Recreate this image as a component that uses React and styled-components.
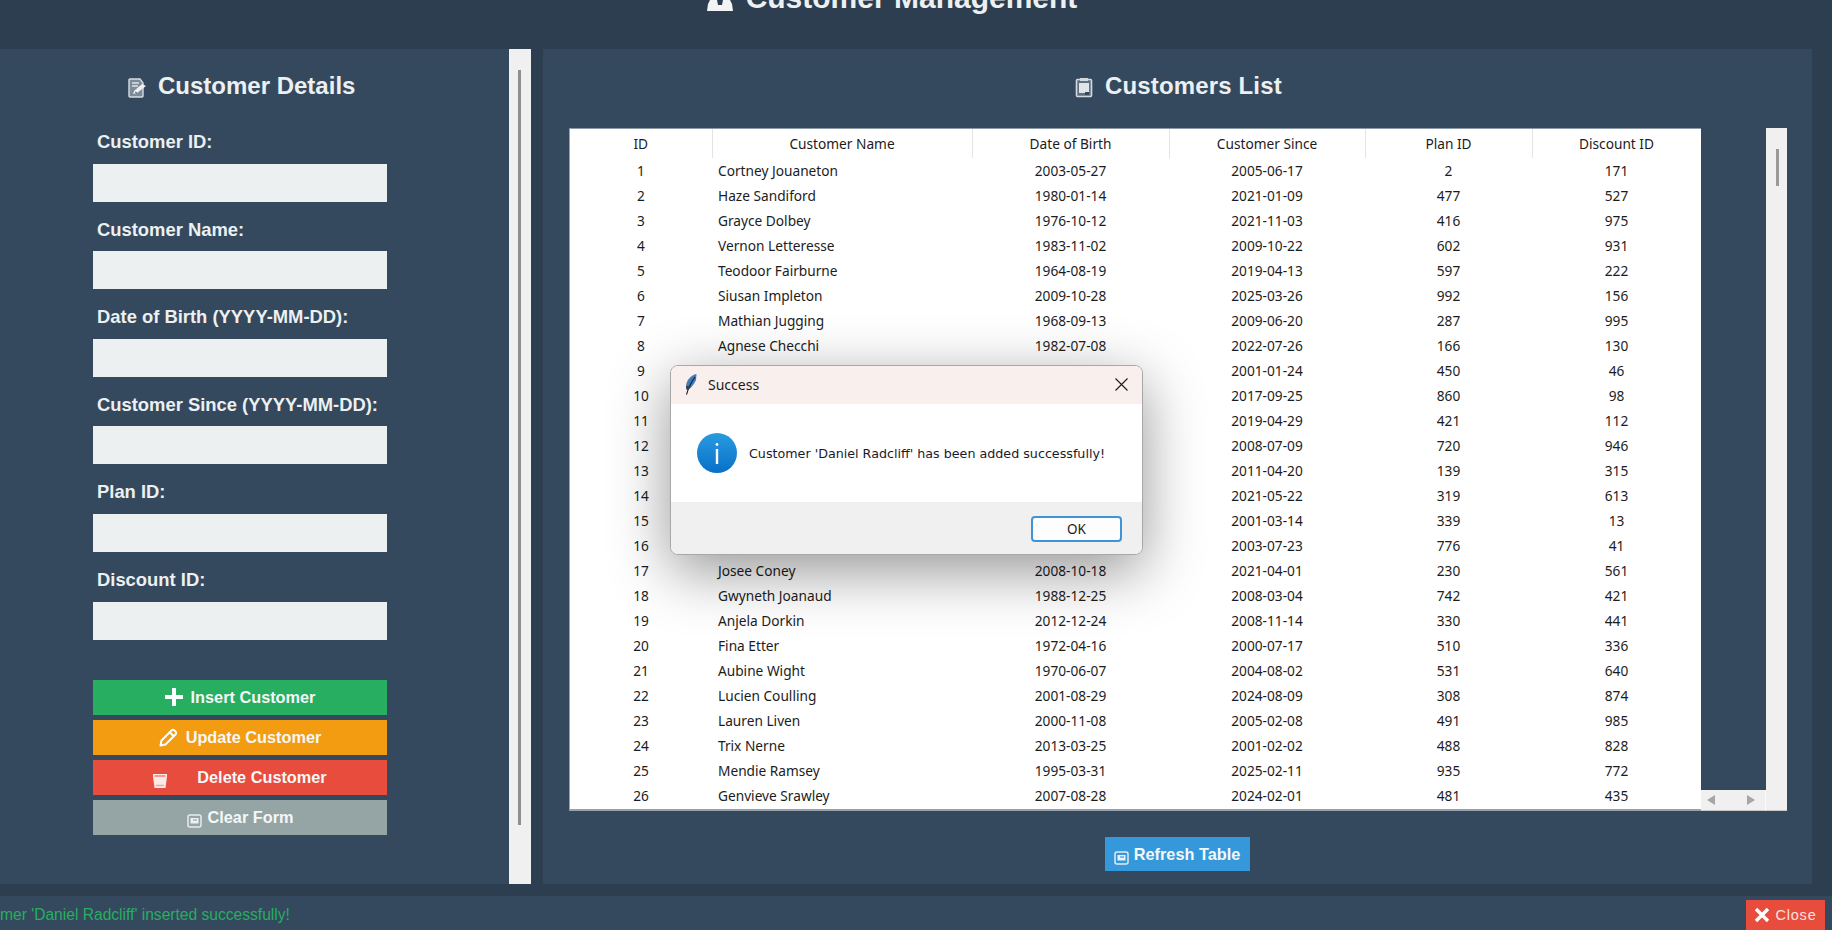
import React from "react";
import styled, { createGlobalStyle } from "styled-components";

const Global = createGlobalStyle`
  html, body { margin: 0; padding: 0; background: #2c3e50; }
  * { box-sizing: border-box; }
`;

const Page = styled.div`
  width: 1832px; height: 930px; position: relative; overflow: hidden;
  display: flex; flex-direction: column; background: #2c3e50;
  font-family: "Liberation Sans", Arial, sans-serif;
`;
const Header = styled.header`
  height: 49px; flex: none; display: flex; justify-content: center; align-items: flex-end;
  padding: 0 48px 35px 0; gap: 13px; overflow: hidden;
`;
const HeaderIcon = styled.span`
  display: flex; flex: none; margin-bottom: 3px;
`;
const AppTitle = styled.h1`
  margin: 0; font-size: 30px; line-height: 32px; font-weight: 700; color: #ecf0f1;
`;
const Main = styled.main`
  height: 835px; flex: none; display: flex; gap: 12px; padding-right: 20px;
`;
const LeftPanel = styled.section`
  width: 509px; flex: none; background: #34495e; padding: 0 0 0 93px;
`;
const PanelTitleRow = styled.div`
  display: flex; align-items: center; gap: ${p => p.$gap}px; height: 57px; margin-top: 8px;
  padding-left: ${p => p.$pad}px;
`;
const PanelTitle = styled.h2`
  margin: 0; font-size: 24px; line-height: 28px; font-weight: 700; color: #ecf0f1;
  letter-spacing: ${p => p.$track || 0}px;
`;
const Form = styled.div`
  width: 294px; display: flex; flex-direction: column;
`;
const Field = styled.div`
  height: 87.6px; display: flex; flex-direction: column;
`;
const Label = styled.label`
  height: 49.6px; flex: none; padding: 17px 0 0 4px; font-size: 18.4px; line-height: 22px; font-weight: 700; color: #ecf0f1;
  white-space: nowrap;
`;
const Input = styled.div`
  height: 38px; background: #ecf0f1; flex: none;
`;
const Buttons = styled.div`
  display: flex; flex-direction: column; gap: 5px; margin-top: 40px;
`;
const ActionButton = styled.button`
  height: 35px; width: 100%; border: 0; padding: 0; margin: 0;
  display: flex; justify-content: center; align-items: center; gap: ${p => p.$gap}px;
  background: ${p => p.$bg}; color: #f4f7f8;
  font: 700 16.3px/20px "Liberation Sans", Arial, sans-serif;
`;
const IconSlot = styled.span`
  display: flex; flex: none; margin-top: ${p => p.$drop || 0}px;
`;
const SideScroll = styled.div`
  width: 22px; flex: none; background: #f0f0f0; padding: 21px 0 0 9px; margin-left: -12px;
`;
const SideThumb = styled.div`
  width: 3px; height: 755px; background: #8f8f8f;
`;
const RightPanel = styled.section`
  flex: 1; min-width: 0; background: #34495e; padding: 0 25px 0 26px;
  display: flex; flex-direction: column;
`;
const TableArea = styled.div`
  height: 683px; margin-top: 14px; display: flex; flex: none;
`;
const TableBox = styled.div`
  width: 1132px; flex: none; background: #fff; border-top: 1px solid #8c99a6; border-bottom: 2px solid #98a2ac; border-left: 1px solid #98a2ac; overflow: hidden;
`;
const Grid = styled.table`
  width: 1131px; table-layout: fixed; border-collapse: collapse;
  font-family: "Noto Sans", sans-serif; font-size: 13.7px; color: #1c1c1c;
`;
const Th = styled.th`
  height: 29px; padding: 0; font-weight: 400; text-align: center; color: #1c1c1c;
  border-right: 1px solid #e4e4e4;
`;
const Td = styled.td`
  height: 25px; padding: 0 0 0 ${p => (p.$left ? 6 : 0)}px; text-align: ${p => (p.$left ? "left" : "center")};
  white-space: nowrap; overflow: hidden;
`;
const Gutter = styled.div`
  width: 65px; flex: none; display: flex; flex-direction: column; justify-content: flex-end;
`;
const HScroll = styled.div`
  height: 21px; background: #f0f0f0; display: flex; align-items: center; justify-content: space-between; padding: 0 10px 0 6px;
  border-right: 1px solid #fafafa; border-bottom: 1px solid #c8c8c8;
`;
const Arrow = styled.span`
  width: 0; height: 0; border-top: 5px solid transparent; border-bottom: 5px solid transparent;
  ${p => (p.$right ? "border-left: 8px solid #a6a6a6;" : "border-right: 8px solid #a6a6a6;")}
`;
const VScroll = styled.div`
  width: 21px; flex: none; background: #f0f0f0; padding: 21px 0 0 10px;
  border-bottom: 1px solid #c8c8c8;
`;
const VThumb = styled.div`
  width: 3px; height: 37px; background: #9a9a9a;
`;
const RefreshRow = styled.div`
  display: flex; justify-content: center; margin-top: 26px; padding-right: 2px;
`;
const RefreshButton = styled.button`
  width: 145px; height: 34px; border: 0; padding: 0; display: flex; align-items: center; justify-content: center; gap: 5px;
  background: #3498db; color: #f4f7f8; font: 700 16.3px/20px "Liberation Sans", Arial, sans-serif;
`;
const StatusBar = styled.footer`
  margin-top: 12px; height: 34px; flex: none; background: #34495e; display: flex; justify-content: space-between; align-items: flex-end; padding-right: 7px;
`;
const StatusText = styled.span`
  align-self: center; font-size: 15.6px; line-height: 18px; color: #27ae60; white-space: nowrap; padding-top: 4px;
`;
const CloseButton = styled.button`
  width: 79px; height: 30px; border: 0; padding: 0; display: flex; align-items: center; justify-content: center; gap: 5px;
  background: #e74c3c; color: #f7e3e0; font: 400 14.5px/18px "Liberation Sans", Arial, sans-serif; letter-spacing: .8px;
`;
const Dialog = styled.div`
  position: absolute; left: 670px; top: 365px; width: 473px; height: 190px;
  border-radius: 8px; overflow: hidden; display: flex; flex-direction: column; background: #fff;
  border: 1px solid #a8a8a8;
  box-shadow: 0 16px 60px rgba(0,0,0,.42);
  font-family: "Noto Sans", sans-serif;
`;
const DialogBar = styled.div`
  height: 38px; flex: none; background: #f9efed; display: flex; align-items: center; padding: 0 14px 2px 14px; gap: 11px;
  font-size: 14px; color: #1b1b1b;
`;
const DialogTitle = styled.span`flex: 1;`;
const DialogBody = styled.div`
  height: 98px; flex: none; display: flex; align-items: center; padding: 0 0 0 26px; gap: 12px;
  font-family: "DejaVu Sans", sans-serif; font-size: 12.7px; color: #1a1a2a; background: #fff;
`;
const DialogMessage = styled.span`
  white-space: nowrap;
`;
const DialogFoot = styled.div`
  flex: 1; background: #f0f0f0; display: flex; justify-content: flex-end; align-items: flex-start; padding: 14px 20px 0 0;
`;
const OkButton = styled.button`
  width: 91px; height: 26px; background: #fdfdfd; border: 2px solid #3d94d8; border-radius: 4px; padding: 0;
  font: 400 13.5px/20px "Noto Sans", sans-serif; color: #1b1b1b;
`;

const rows = [
  [1, "Cortney Jouaneton", "2003-05-27", "2005-06-17", 2, 171],
  [2, "Haze Sandiford", "1980-01-14", "2021-01-09", 477, 527],
  [3, "Grayce Dolbey", "1976-10-12", "2021-11-03", 416, 975],
  [4, "Vernon Letteresse", "1983-11-02", "2009-10-22", 602, 931],
  [5, "Teodoor Fairburne", "1964-08-19", "2019-04-13", 597, 222],
  [6, "Siusan Impleton", "2009-10-28", "2025-03-26", 992, 156],
  [7, "Mathian Jugging", "1968-09-13", "2009-06-20", 287, 995],
  [8, "Agnese Checchi", "1982-07-08", "2022-07-26", 166, 130],
  [9, "", "", "2001-01-24", 450, 46],
  [10, "", "", "2017-09-25", 860, 98],
  [11, "", "", "2019-04-29", 421, 112],
  [12, "", "", "2008-07-09", 720, 946],
  [13, "", "", "2011-04-20", 139, 315],
  [14, "", "", "2021-05-22", 319, 613],
  [15, "", "", "2001-03-14", 339, 13],
  [16, "", "", "2003-07-23", 776, 41],
  [17, "Josee Coney", "2008-10-18", "2021-04-01", 230, 561],
  [18, "Gwyneth Joanaud", "1988-12-25", "2008-03-04", 742, 421],
  [19, "Anjela Dorkin", "2012-12-24", "2008-11-14", 330, 441],
  [20, "Fina Etter", "1972-04-16", "2000-07-17", 510, 336],
  [21, "Aubine Wight", "1970-06-07", "2004-08-02", 531, 640],
  [22, "Lucien Coulling", "2001-08-29", "2024-08-09", 308, 874],
  [23, "Lauren Liven", "2000-11-08", "2005-02-08", 491, 985],
  [24, "Trix Nerne", "2013-03-25", "2001-02-02", 488, 828],
  [25, "Mendie Ramsey", "1995-03-31", "2025-02-11", 935, 772],
  [26, "Genvieve Srawley", "2007-08-28", "2024-02-01", 481, 435],
];
const colWidths = [142, 260, 197, 196, 167, 169];
const heads = ["ID", "Customer Name", "Date of Birth", "Customer Since", "Plan ID", "Discount ID"];
const fields = ["Customer ID:", "Customer Name:", "Date of Birth (YYYY-MM-DD):", "Customer Since (YYYY-MM-DD):", "Plan ID:", "Discount ID:"];

const BustIcon = () => (
  <svg width="26" height="24" viewBox="0 0 26 24" fill="#f2f4f5">
    <circle cx="7" cy="6" r="5" />
    <circle cx="19" cy="6" r="5" />
    <path d="M0 24 L1 17 L3 13 L10 13 L11 18 L15 18 L16 13 L23 13 L25 17 L26 24 Z" />
  </svg>
);
const DocIcon = () => (
  <svg width="20" height="21" viewBox="0 0 20 21" fill="none">
    <path d="M2 2h10l3 4v13a1 1 0 0 1-1 1H2a1 1 0 0 1-1-1V3a1 1 0 0 1 1-1z" fill="#7d8b99" stroke="#d7dde2" strokeWidth="1.4" />
    <path d="M4 6h7M4 9h6" stroke="#dfe4e8" strokeWidth="1.4" />
    <path d="M5 17l1-3 8-7 4 2-9 7z" fill="#eef1f3" />
    <path d="M7 15l2 1" stroke="#4d5f70" strokeWidth="1" />
  </svg>
);
const ClipIcon = () => (
  <svg width="18" height="21" viewBox="0 0 18 21" fill="none">
    <rect x="1.5" y="2.5" width="15" height="17" rx="1" fill="#5f6f7f" stroke="#d3d9de" strokeWidth="1.6" />
    <rect x="5" y="1" width="8" height="3" fill="#d3d9de" />
    <rect x="4" y="6" width="10" height="10" fill="#dfe4e8" />
    <rect x="10" y="15" width="4" height="3" fill="#39485a" />
  </svg>
);
const PlusIcon = () => (
  <svg width="18" height="18" viewBox="0 0 18 18"><path d="M7 0h4v7h7v4h-7v7H7v-7H0V7h7z" fill="#fff" /></svg>
);
const PencilIcon = () => (
  <svg width="19" height="19" viewBox="0 0 19 19" fill="none" stroke="#fff" strokeWidth="2" strokeLinejoin="round">
    <path d="M1.5 17.5l1-5L12.5 2.5a2 2 0 0 1 3 0l1 1a2 2 0 0 1 0 3l-10 10z" />
    <path d="M11 4.5l3.5 3.5" />
  </svg>
);
const BinIcon = () => (
  <svg width="14" height="14" viewBox="0 0 14 14">
    <path d="M0 0h14v2.5l-1.5 11.5h-11L0 2.5z" fill="#fde9e6" />
    <path d="M1.5 2h11" stroke="#e74c3c" strokeWidth="1" />
    <path d="M3 11.5h8" stroke="#f3a69c" strokeWidth="1.4" />
  </svg>
);
const FrameIcon = ({ fill }) => (
  <svg width="15" height="14" viewBox="0 0 15 14" fill="none">
    <rect x="1" y="1" width="13" height="12" rx="2" fill={fill} stroke="#e6ebee" strokeWidth="1.5" />
    <rect x="3.5" y="4" width="8" height="5.5" fill="#eef1f3" />
    <path d="M6 6h4" stroke={fill} strokeWidth="1.2" />
  </svg>
);
const XIcon = () => (
  <svg width="16" height="16" viewBox="0 0 16 16"><path d="M2 2l12 12M14 2L2 14" stroke="#fff" strokeWidth="3.4" /></svg>
);
const Feather = () => (
  <svg width="12" height="21" viewBox="0 0 12 21">
    <path d="M11.5 0C6 1 1.5 6 1 12c0 2 .5 3 1 4 3-1 7-5 9-10z" fill="#3f7cbc" />
    <path d="M10 3C7 7 4 12 1.5 20.5" stroke="#1c1c1c" strokeWidth="1.1" fill="none" />
    <path d="M1 12c0 2 .5 3 1 4 2-1 3-2 4-3.5z" fill="#33404e" />
  </svg>
);
const CloseGlyph = () => (
  <svg width="13" height="13" viewBox="0 0 13 13"><path d="M.5.5l12 12M12.5.5l-12 12" stroke="#1b1b1b" strokeWidth="1.1" /></svg>
);
const InfoIcon = () => (
  <svg width="40" height="40" viewBox="0 0 40 40">
    <defs>
      <linearGradient id="infoFill" x1="0" y1="0" x2="0" y2="1">
        <stop offset="0" stopColor="#2a9be0" />
        <stop offset="1" stopColor="#0870c8" />
      </linearGradient>
    </defs>
    <circle cx="20" cy="20" r="20" fill="url(#infoFill)" />
    <rect x="18.8" y="16" width="2.4" height="15" fill="#fff" />
    <rect x="18.6" y="10" width="2.8" height="3" rx="1.4" fill="#fff" />
  </svg>
);

export default function App() {
  return (
    <Page>
      <Global />
      <Header>
        <HeaderIcon><BustIcon /></HeaderIcon>
        <AppTitle>Customer Management</AppTitle>
      </Header>
      <Main>
        <LeftPanel>
          <PanelTitleRow $gap={10} $pad={35}>
            <IconSlot $drop={4}><DocIcon /></IconSlot>
            <PanelTitle>Customer Details</PanelTitle>
          </PanelTitleRow>
          <Form>
            {fields.map(f => (
              <Field key={f}>
                <Label>{f}</Label>
                <Input />
              </Field>
            ))}
            <Buttons>
              <ActionButton $bg="#27ae60" $gap={8}><PlusIcon />Insert Customer</ActionButton>
              <ActionButton $bg="#f39c12" $gap={8}><PencilIcon />Update Customer</ActionButton>
              <ActionButton $bg="#e74c3c" $gap={30}><IconSlot $drop={8}><BinIcon /></IconSlot>Delete Customer</ActionButton>
              <ActionButton $bg="#95a5a6" $gap={6}><IconSlot $drop={8}><FrameIcon fill="#95a5a6" /></IconSlot>Clear Form</ActionButton>
            </Buttons>
          </Form>
        </LeftPanel>
        <SideScroll><SideThumb /></SideScroll>
        <RightPanel>
          <PanelTitleRow $gap={12} $pad={506}>
            <IconSlot $drop={4}><ClipIcon /></IconSlot>
            <PanelTitle $track={0.15}>Customers List</PanelTitle>
          </PanelTitleRow>
          <TableArea>
            <TableBox>
              <Grid>
                <colgroup>
                  {colWidths.map((w, i) => <col key={i} width={w} />)}
                </colgroup>
                <thead>
                  <tr>{heads.map(h => <Th key={h}>{h}</Th>)}</tr>
                </thead>
                <tbody>
                  {rows.map(r => (
                    <tr key={r[0]}>
                      {r.map((c, i) => <Td key={i} $left={i === 1}>{c}</Td>)}
                    </tr>
                  ))}
                </tbody>
              </Grid>
            </TableBox>
            <Gutter>
              <HScroll><Arrow /><Arrow $right /></HScroll>
            </Gutter>
            <VScroll><VThumb /></VScroll>
          </TableArea>
          <RefreshRow>
            <RefreshButton><IconSlot $drop={8}><FrameIcon fill="#3498db" /></IconSlot>Refresh Table</RefreshButton>
          </RefreshRow>
        </RightPanel>
      </Main>
      <StatusBar>
        <StatusText>mer 'Daniel Radcliff' inserted successfully!</StatusText>
        <CloseButton><XIcon />Close</CloseButton>
      </StatusBar>
      <Dialog>
        <DialogBar>
          <Feather />
          <DialogTitle>Success</DialogTitle>
          <CloseGlyph />
        </DialogBar>
        <DialogBody>
          <InfoIcon />
          <DialogMessage>Customer 'Daniel Radcliff' has been added successfully!</DialogMessage>
        </DialogBody>
        <DialogFoot><OkButton>OK</OkButton></DialogFoot>
      </Dialog>
    </Page>
  );
}
